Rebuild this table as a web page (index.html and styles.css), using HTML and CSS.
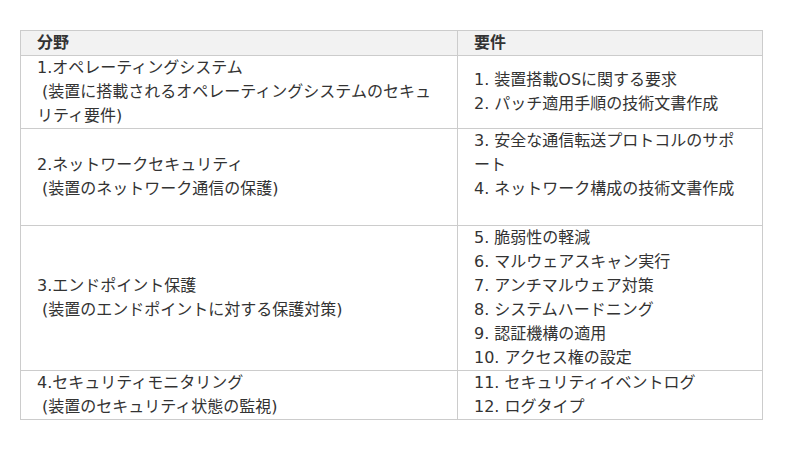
FILE: index.html
```html
<!DOCTYPE html>
<html lang="ja">
<head>
<meta charset="utf-8">
<link rel="stylesheet" href="styles.css">
</head>
<body>
<table class="req-table">
  <colgroup>
    <col class="col-area">
    <col class="col-req">
  </colgroup>
  <thead>
    <tr><th>分野</th><th>要件</th></tr>
  </thead>
  <tbody>
    <tr>
      <td>1.オペレーティングシステム<br>&nbsp;(装置に搭載されるオペレーティングシステムのセキュリティ要件)</td>
      <td>1. 装置搭載OSに関する要求<br>2. パッチ適用手順の技術文書作成</td>
    </tr>
    <tr>
      <td>2.ネットワークセキュリティ<br>&nbsp;(装置のネットワーク通信の保護)</td>
      <td>3. 安全な通信転送プロトコルのサポート<br>4. ネットワーク構成の技術文書作成<br>&nbsp;</td>
    </tr>
    <tr>
      <td>3.エンドポイント保護<br>&nbsp;(装置のエンドポイントに対する保護対策)</td>
      <td>5. 脆弱性の軽減<br>6. マルウェアスキャン実行<br>7. アンチマルウェア対策<br>8. システムハードニング<br>9. 認証機構の適用<br>10. アクセス権の設定</td>
    </tr>
    <tr>
      <td>4.セキュリティモニタリング<br>&nbsp;(装置のセキュリティ状態の監視)</td>
      <td>11. セキュリティイベントログ<br>12. ログタイプ</td>
    </tr>
  </tbody>
</table>
</body>
</html>
```
FILE: styles.css
```css
html, body {
  margin: 0;
  padding: 0;
  background: #ffffff;
}
body {
  padding: 30px 20px;
  font-family: "DejaVu Sans", "Noto Sans CJK JP", sans-serif;
  font-size: 16px;
  line-height: 24px;
  color: #333333;
}
.req-table {
  width: 742px;
  border-collapse: collapse;
  table-layout: fixed;
}
.col-area { width: 437px; }
.col-req { width: 305px; }
.req-table th,
.req-table td {
  border: 1px solid #cccccc;
  padding: 0 16px;
  text-align: left;
  vertical-align: middle;
}
.req-table th {
  background: #f2f2f2;
  font-weight: bold;
  color: #333333;
}
```
